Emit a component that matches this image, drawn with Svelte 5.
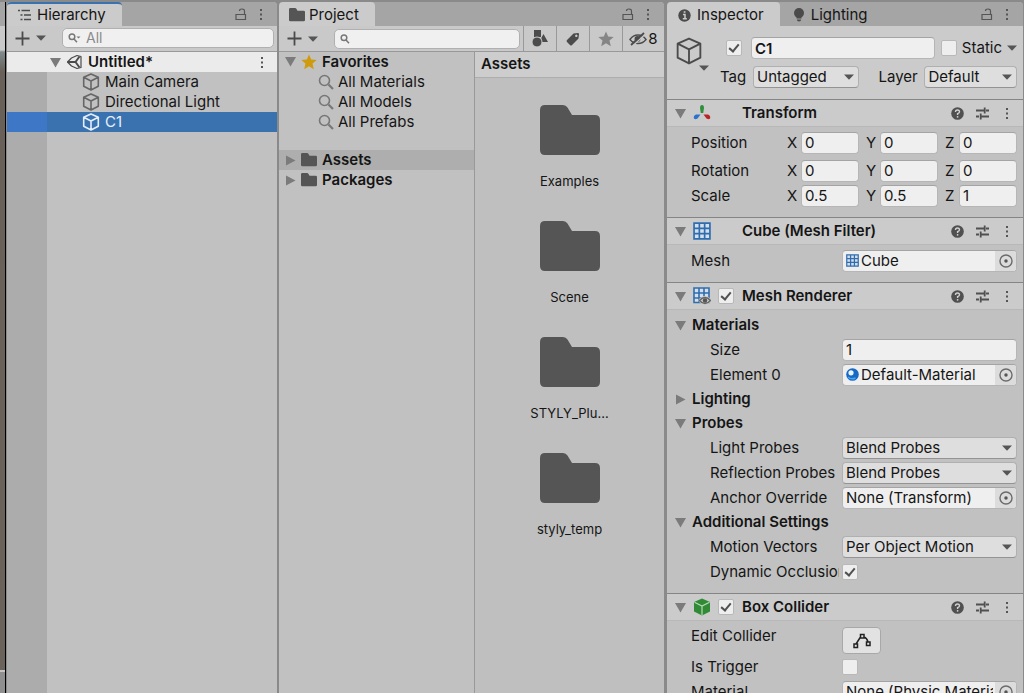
<script>
	let sceneItems = [
		{ name: 'Main Camera' },
		{ name: 'Directional Light' },
		{ name: 'C1' }
	]
	let selected = $state('C1')

	const favorites = ['All Materials', 'All Models', 'All Prefabs']
	const roots = ['Assets', 'Packages']
	const folders = ['Examples', 'Scene', 'STYLY_Plu...', 'styly_temp']

	let transform = $state([
		{ name: 'Position', x: '0', y: '0', z: '0' },
		{ name: 'Rotation', x: '0', y: '0', z: '0' },
		{ name: 'Scale', x: '0.5', y: '0.5', z: '1' }
	])
	const axes = ['x', 'y', 'z']
</script>

{#snippet lock()}
	<svg width="12" height="13" viewBox="0 0 12 13" fill="none" stroke="#555" stroke-width="1.2"><path d="M1 6.5h9.5v5H1zM9.5 6V3.2C9.5 1.6 8.7 1 7 1S4.5 1.6 4.5 3" /></svg>
{/snippet}

{#snippet dots()}
	<svg width="4" height="13" viewBox="0 0 4 13" fill="#555"><path d="M1 1h2v2H1zM1 5.5h2v2H1zM1 10h2v2H1z" /></svg>
{/snippet}

{#snippet down()}
	<svg class="arrow" width="10" height="6" viewBox="0 0 10 6" fill="#555"><path d="M0 0.5h10L5 5.7z" /></svg>
{/snippet}

{#snippet fold(open)}
	<svg class="fold" width="11" height="11" viewBox="0 0 11 11" fill="#7b7b7b"><path d={open ? 'M0 1h11L5.5 10.5z' : 'M1 0.5v10L10.5 5.5z'} /></svg>
{/snippet}

{#snippet plus()}
	<svg width="15" height="15" viewBox="0 0 15 15" stroke="#4b4b4b" stroke-width="1.8"><path d="M7.5 0.5v14M0.5 7.5h14" /></svg>
{/snippet}

{#snippet cube(size, color, width)}
	<svg width={size} height={size} viewBox="0 0 18 18" fill="none" stroke={color} stroke-width={width} stroke-linejoin="round"><path d="M9 1l7.3 3.3v9L9 17l-7.3-3.7v-9zM1.7 4.3L9 8l7.3-3.7M9 8v9" /></svg>
{/snippet}

{#snippet folder(size)}
	<svg width={size} height={size * 5 / 6} viewBox="0 0 60 50" fill="#555"><path d="M5 0h18q3 0 4.500 2.500L32 10h23q5 0 5 5v30q0 5-5 5H5q-5 0-5-5V5q0-5 5-5z" /></svg>
{/snippet}

{#snippet star(size, color)}
	<svg width={size} height={size} viewBox="0 0 16 16" fill={color}><path d="M8 0.5l2.2 5 5.5 0.5-4.2 3.6 1.3 5.6L8 12.3l-4.8 2.9 1.3-5.6L0.3 6l5.5-0.5z" /></svg>
{/snippet}

{#snippet grid(size)}
	<svg width={size} height={size} viewBox="0 0 17 17" fill="#d5dfe9" stroke="#2f6db0" stroke-width="1.6"><path d="M1 1h15v15H1zM6 1v15M11 1v15M1 6h15M1 11h15" /></svg>
{/snippet}

{#snippet tools()}
	<div class="tools">
		<button aria-label="Help">
			<svg width="13" height="13" viewBox="0 0 13 13"><circle cx="6.5" cy="6.5" r="6.3" fill="#505050" /><path d="M4.5 5Q4.5 3 6.5 3T8.5 4.8Q8.5 6 6.6 6.6V8" fill="none" stroke="#d0d0d0" stroke-width="1.4" /><circle cx="6.6" cy="9.8" r="0.9" fill="#d0d0d0" /></svg>
		</button>
		<button aria-label="Presets">
			<svg width="13" height="13" viewBox="0 0 13 13" fill="none" stroke="#505050" stroke-width="1.8"><path d="M0 3.5h8M10 3.5h3M8.7 0.5v6M0 9.5h3M5 9.5h8M4.7 6.5v6" /></svg>
		</button>
		<button aria-label="More">{@render dots()}</button>
	</div>
{/snippet}

{#snippet target()}
	<button class="target" aria-label="Select object">
		<svg width="14" height="14" viewBox="0 0 13 13"><circle cx="6.5" cy="6.5" r="5.6" fill="none" stroke="#6b6b6b" stroke-width="1.3" /><circle cx="6.5" cy="6.5" r="1.6" fill="#555" /></svg>
	</button>
{/snippet}

{#snippet dropdown(id, value)}
	<span class="dropdown">
		<select {id}><option>{value}</option></select>
		{@render down()}
	</span>
{/snippet}

<main>
	<div class="scene-edge"></div>

	<section class="panel hierarchy">
		<header class="tabs">
			<button class="tab focused">
				<svg width="14" height="12" viewBox="0 0 14 12" stroke="#4b4b4b" stroke-width="1.5"><path d="M0 1.5h2M3.5 1.5H12M2.500 6h2M6 6h7M2.500 10.500h2M6 10.500h7" /></svg>
				Hierarchy
			</button>
			<div class="tab-tools">
				<button aria-label="Lock">{@render lock()}</button>
				<button aria-label="Menu">{@render dots()}</button>
			</div>
		</header>
		<div class="toolbar">
			<button class="add" aria-label="Create">{@render plus()}{@render down()}</button>
			<label class="search">
				<svg width="13" height="10" viewBox="0 0 13 10" fill="none" stroke="#777" stroke-width="1.5"><circle cx="4" cy="3.8" r="2.8" /><path d="M6 6l3 3.3" /><path d="M8.5 3.5h4L10.500 5.500z" fill="#777" stroke="none" /></svg>
				<input type="text" placeholder="All" aria-label="Search hierarchy">
			</label>
		</div>
		<div class="tree">
			<div class="row scene">
				{@render fold(true)}
				<svg width="17" height="16" viewBox="0 0 17 16" fill="none" stroke="#4b4b4b" stroke-width="1.5" stroke-linejoin="round"><path d="M1.500 8L5.500 4L11 1.500L15 2.500V13.500L11 14.500L5.500 12z" stroke-width="1.2" /><path d="M1.500 8H9.500L13.500 2.500M9.500 8L13.500 13.500" stroke-width="2" /></svg>
				<b>Untitled*</b>
				<button class="row-menu" aria-label="Scene menu">{@render dots()}</button>
			</div>
			<div class="scene-body">
				{#each sceneItems as item}
					<button class="row object" class:selected={item.name === selected} onclick={() => selected = item.name}>
						{@render cube(18, item.name === selected ? '#e4eefa' : '#666', 1.6)}
						{item.name}
					</button>
				{/each}
			</div>
		</div>
	</section>

	<section class="panel project">
		<header class="tabs">
			<button class="tab">{@render folder(16)} Project</button>
			<div class="tab-tools">
				<button aria-label="Lock">{@render lock()}</button>
				<button aria-label="Menu">{@render dots()}</button>
			</div>
		</header>
		<div class="toolbar">
			<button class="add" aria-label="Create">{@render plus()}{@render down()}</button>
			<label class="search">
				<svg width="10" height="10" viewBox="0 0 10 10" fill="none" stroke="#777" stroke-width="1.5"><circle cx="4" cy="3.8" r="2.8" /><path d="M6 6l3 3.3" /></svg>
				<input type="text" aria-label="Search project">
			</label>
			<div class="filters">
				<button aria-label="Search by type">
					<svg width="16" height="17" viewBox="0 0 16 17" fill="#4b4b4b"><path d="M2 0h7v7H2zM11.5 4l4.500 8H9.500V7.500z" /><circle cx="5" cy="12" r="5" stroke="#c9c9c9" stroke-width="1" /></svg>
				</button>
				<button aria-label="Search by label">
					<svg width="14" height="14" viewBox="0 0 14 14" fill="#4b4b4b"><path fill-rule="evenodd" d="M7.5 1.5L12 1q1 0 1 1l-0.5 4.5L6 13Q5 14 4 13L1 10Q0 9 1 8zM10.3 2.6a1.2 1.2 0 1 0 0.01 0z" /></svg>
				</button>
				<button aria-label="Save search">{@render star(16, '#858585')}</button>
				<button class="hidden-count">
					<svg width="18" height="14" viewBox="0 0 18 14" fill="none" stroke="#4b4b4b" stroke-width="1.4"><path d="M1 7.5Q4 3 9 3t8 4.500Q14 11.500 9 11.500T1 7.500z" /><circle cx="8.500" cy="7" r="2.300" fill="#4b4b4b" /><path d="M3.500 14L16.500 2" stroke="#c9c9c9" /><path d="M2 13L15 1" stroke-width="1.800" /></svg>8
				</button>
			</div>
		</div>
		<div class="columns">
			<nav>
				<div class="row">
					{@render fold(true)}
					{@render star(16, '#cf9a0c')}
					<b>Favorites</b>
				</div>
				{#each favorites as name}
					<button class="row favorite">
						<svg width="16" height="16" viewBox="0 0 16 16" fill="none" stroke="#777"><circle cx="6.500" cy="6.500" r="5" stroke-width="1.600" /><path d="M10.500 10.500L15 15" stroke-width="2.200" /></svg>
						{name}
					</button>
				{/each}
				<div class="roots">
					{#each roots as name}
						<div class="row" class:current={name === 'Assets'}>
							{@render fold(false)}
							{@render folder(16)}
							<b>{name}</b>
						</div>
					{/each}
				</div>
			</nav>
			<div class="assets">
				<h2>Assets</h2>
				<div class="tiles">
					{#each folders as name}
						<button class="tile">{@render folder(60)}<span>{name}</span></button>
					{/each}
				</div>
			</div>
		</div>
	</section>

	<section class="panel inspector">
		<header class="tabs">
			<button class="tab">
				<svg width="13" height="13" viewBox="0 0 13 13"><circle cx="6.500" cy="6.500" r="6.200" fill="#4b4b4b" /><path d="M5 5.500h2v4M4.800 9.700h4M5.700 3h1.800" fill="none" stroke="#ccc" stroke-width="1.500" /></svg>
				Inspector
			</button>
			<button class="tab idle">
				<svg width="12" height="14" viewBox="0 0 12 14" fill="#4b4b4b"><circle cx="6" cy="5" r="5" /><path d="M3.500 8h5v2.500h-5zM3.800 11.500h4.400Q8 13.500 6 13.500T3.800 11.500z" /></svg>
				Lighting
			</button>
			<div class="tab-tools">
				<button aria-label="Lock">{@render lock()}</button>
				<button aria-label="Menu">{@render dots()}</button>
			</div>
		</header>

		<div class="object-header">
			<button class="object-icon" aria-label="Object icon">{@render cube(28, '#4b4b4b', 1.2)}{@render down()}</button>
			<div class="object-fields">
				<div class="line">
					<input type="checkbox" checked aria-label="Active">
					<input class="field name" type="text" value="C1" aria-label="Name">
					<label class="static"><input type="checkbox"> Static</label>
					{@render down()}
				</div>
				<div class="line">
					<label class="tag" for="tag">Tag</label>
					{@render dropdown('tag', 'Untagged')}
					<label class="layer" for="layer">Layer</label>
					{@render dropdown('layer', 'Default')}
				</div>
			</div>
		</div>

		<article>
			<div class="component">
				{@render fold(true)}
				<svg width="18" height="18" viewBox="0 0 18 18"><path d="M9 1Q11 1 11 4L10.200 9H7.800L7 4Q7 1 9 1z" fill="#2f8f3c" /><path d="M7.500 10.500L3 10.500Q0 12 1 14.500Q2 16 4.500 14.500z" fill="#2b72cc" /><path d="M10.500 10.500l4.500 0q3 1.500 2 4q-1 1.500-3.500 0z" fill="#bb2424" /></svg>
				<h3>Transform</h3>
				{@render tools()}
			</div>
			<div class="body">
				{#each transform as item}
					<div class="prop vector">
						<span>{item.name}</span>
						<div class="axes">
							{#each axes as axis}
								<label>{axis.toUpperCase()} <input class="field" type="text" bind:value={item[axis]}></label>
							{/each}
						</div>
					</div>
				{/each}
			</div>
		</article>

		<article>
			<div class="component">
				{@render fold(true)}
				{@render grid(18)}
				<h3>Cube (Mesh Filter)</h3>
				{@render tools()}
			</div>
			<div class="body">
				<div class="prop">
					<label for="mesh">Mesh</label>
					<div class="field object-field">{@render grid(13)}<input id="mesh" type="text" readonly value="Cube">{@render target()}</div>
				</div>
			</div>
		</article>

		<article>
			<div class="component">
				{@render fold(true)}
				<svg width="18" height="18" viewBox="0 0 18 18"><path d="M1 1h15v14.500H1zM6 1v14.500M11 1v14.500M1 6h15M1 11h15" fill="#d5dfe9" stroke="#2f6db0" stroke-width="1.600" /><path d="M5 13.500Q8 9 12 9t6.500 4.500q-3 4.500-6.500 4.500t-7-4.500z" fill="#cbcbcb" /><path d="M6.500 13.500Q9 10.500 12 10.500t5.500 3q-2.500 3-5.500 3t-5.500-3z" fill="#cbcbcb" stroke="#666" stroke-width="1.500" /><circle cx="12" cy="13.500" r="2.200" fill="#555" /></svg>
				<input type="checkbox" checked aria-label="Mesh Renderer enabled">
				<h3>Mesh Renderer</h3>
				{@render tools()}
			</div>
			<div class="body">
				<div class="foldout">{@render fold(true)} Materials</div>
				<div class="prop sub">
					<label for="size">Size</label>
					<input id="size" class="field" type="text" value="1">
				</div>
				<div class="prop sub">
					<label for="element">Element 0</label>
					<div class="field object-field">
						<svg width="13" height="13" viewBox="0 0 13 13"><circle cx="6.500" cy="6.500" r="6.300" fill="#1769c4" /><path d="M2 9Q5 12 9.500 10" fill="none" stroke="#4aa3ef" stroke-width="1.500" /><circle cx="5" cy="4.800" r="2.600" fill="#eaf4ff" /></svg>
						<input id="element" type="text" readonly value="Default-Material">{@render target()}
					</div>
				</div>
				<div class="foldout">{@render fold(false)} Lighting</div>
				<div class="foldout">{@render fold(true)} Probes</div>
				<div class="prop sub">
					<label for="light">Light Probes</label>
					{@render dropdown('light', 'Blend Probes')}
				</div>
				<div class="prop sub">
					<label for="reflection">Reflection Probes</label>
					{@render dropdown('reflection', 'Blend Probes')}
				</div>
				<div class="prop sub">
					<label for="anchor">Anchor Override</label>
					<div class="field object-field"><input id="anchor" type="text" readonly value="None (Transform)">{@render target()}</div>
				</div>
				<div class="foldout">{@render fold(true)} Additional Settings</div>
				<div class="prop sub">
					<label for="motion">Motion Vectors</label>
					{@render dropdown('motion', 'Per Object Motion')}
				</div>
				<div class="prop sub">
					<label for="occlusion">Dynamic Occlusion</label>
					<input id="occlusion" type="checkbox" checked>
				</div>
			</div>
		</article>

		<article>
			<div class="component">
				{@render fold(true)}
				<svg width="18" height="18" viewBox="0 0 18 18"><path d="M9 0.500l8 3.500v9.500L9 17.500l-8-4V4z" fill="#328a36" /><path d="M1.500 4.300L9 8l7.500-3.700M9 8v9.300" fill="none" stroke="#b5dbb6" stroke-width="1.200" /></svg>
				<input type="checkbox" checked aria-label="Box Collider enabled">
				<h3>Box Collider</h3>
				{@render tools()}
			</div>
			<div class="body">
				<div class="prop edit">
					<label for="edit">Edit Collider</label>
					<button id="edit" class="edit-button" aria-label="Edit Collider">
						<svg width="18" height="16" viewBox="0 0 18 16" fill="none" stroke="#222" stroke-width="1.500"><path d="M1 11h3.500v3.500H1zM13.500 9H17v3.500h-3.500zM7.500 1.500H11V5H7.500zM3 11L7.500 4M11 4q3 1 4 5" /></svg>
					</button>
				</div>
				<div class="prop">
					<label for="trigger">Is Trigger</label>
					<input id="trigger" type="checkbox">
				</div>
				<div class="prop">
					<label for="physic">Material</label>
					<div class="field object-field"><input id="physic" type="text" readonly value="None (Physic Material)">{@render target()}</div>
				</div>
			</div>
		</article>
	</section>
</main>

<style>
	:global(body) {
		background: #8a8a8a;
	}

	main {
		display: grid;
		grid-template-columns: 5px 270fr 386fr 356fr;
		column-gap: 2px;
		box-sizing: border-box;
		height: 100vh;
		padding: 2px 1px 0 0;
		overflow: hidden;
		background: #8a8a8a;
		color: #151515;
		font-family: Inter, "Liberation Sans", sans-serif;
		font-size: 15px;
		line-height: 20px;
	}

	button,
	input,
	select {
		box-sizing: border-box;
		margin: 0;
		padding: 0;
		border: 0;
		background: none;
		color: inherit;
		font: inherit;
	}

	svg {
		flex: none;
	}

	.scene-edge {
		border-right: 1px solid #000;
		background: linear-gradient(#a5a5a5 24px, #c9c9c9 24px 48px, #7f8a8c 50px, #686059 70px, #6b625b 668px, #c4c4c4 668px 670px, #8f8f8f 670px);
		margin-right: -1px;
	}

	.panel {
		display: flex;
		flex-direction: column;
		min-width: 0;
		min-height: 0;
		background: #c1c1c1;
		border-radius: 4px 4px 0 0;
		overflow: hidden;
	}

	.project {
		margin-right: 1px;
	}

	.tabs {
		display: flex;
		flex: none;
		height: 24px;
		background: #a5a5a5;
	}

	.tab {
		display: flex;
		align-items: center;
		gap: 5px;
		padding: 2px 16px 0 11px;
		border-radius: 4px 4px 0 0;
		background: #cbcbcb;
	}

	.project .tab {
		padding-left: 10px;
		gap: 4px;
	}

	.focused {
		padding-top: 0;
		border-top: 2px solid #3a72b0;
	}

	.inspector .tab {
		gap: 6px;
	}

	.tab.idle {
		padding-left: 13px;
		background: none;
	}

	.tab-tools {
		display: flex;
		align-items: center;
		gap: 12px;
		margin-left: auto;
		padding-right: 14px;
	}

	.tab-tools button,
	.tools button {
		display: flex;
	}

	.toolbar {
		display: flex;
		flex: none;
		align-items: center;
		box-sizing: border-box;
		height: 26px;
		padding: 0 3px 1px 8px;
		border-bottom: 1px solid #999;
		background: #c9c9c9;
	}

	.add {
		display: flex;
		align-items: center;
		gap: 6px;
		margin-right: 16px;
	}

	.search {
		display: flex;
		flex: 1;
		align-items: center;
		gap: 5px;
		box-sizing: border-box;
		min-width: 0;
		height: 20px;
		padding: 0 5px;
		border: 1px solid #b0b0b0;
		border-radius: 5px;
		background: #f0f0f0;
	}

	.search input {
		flex: 1;
		min-width: 0;
		font-size: 14px;
	}

	.search input::placeholder {
		color: #8b8b8b;
	}

	.tree {
		flex: 1;
		display: flex;
		flex-direction: column;
	}

	.row {
		display: flex;
		align-items: center;
		gap: 5px;
		width: 100%;
		height: 20px;
		box-sizing: border-box;
		padding-bottom: 1px;
		text-align: left;
		white-space: nowrap;
	}

	.scene {
		padding: 0 13px 0 43px;
		background: #ebebeb;
	}

	.row-menu {
		display: flex;
		margin-left: auto;
	}

	.scene-body {
		flex: 1;
		background: linear-gradient(to right, #acacac 40px, #c1c1c1 40px);
	}

	.object {
		padding-left: 75px;
	}

	.selected {
		background: linear-gradient(to right, #3d77c6 40px, #3a72b0 40px);
		color: #e8f0fa;
	}

	.project .toolbar {
		padding-right: 0;
		padding-bottom: 0;
	}

	.filters {
		display: flex;
		align-self: stretch;
		margin-left: 3px;
	}

	.filters button {
		display: flex;
		align-items: center;
		justify-content: center;
		width: 33px;
		border-left: 1px solid #999;
	}

	.filters .hidden-count {
		width: 42px;
		gap: 1px;
	}

	.columns {
		display: flex;
		flex: 1;
		min-height: 0;
	}

	nav {
		flex: 195;
		border-right: 1px solid #999;
	}

	nav .row {
		padding-left: 6px;
	}

	nav .favorite {
		gap: 4px;
		padding-left: 39px;
	}

	.roots {
		margin-top: 18px;
	}

	.roots .row {
		padding-bottom: 0;
	}

	.current {
		background: #aeaeae;
	}

	.assets {
		flex: 189;
		background: #bfbfbf;
	}

	h2,
	h3 {
		margin: 0;
		font-size: 15px;
		font-weight: 600;
	}

	b {
		font-weight: 600;
	}

	h2 {
		padding: 2px 6px 3px;
		border-bottom: 1px solid #adadad;
		background: #cdcdcd;
	}

	.tiles {
		display: grid;
		justify-content: center;
		grid-template-columns: 90px;
		gap: 30px;
		padding-top: 27px;
	}

	.tile {
		display: flex;
		flex-direction: column;
		align-items: center;
		gap: 16px;
		font-size: 13px;
	}

	.object-header {
		display: flex;
		gap: 17px;
		flex: none;
		box-sizing: border-box;
		height: 73px;
		padding: 11px 6px 0 8px;
		background: #cbcbcb;
	}

	.object-icon {
		display: flex;
		flex-direction: column;
		align-items: flex-end;
		align-self: flex-start;
		width: 34px;
	}

	.object-icon :global(svg:first-child) {
		align-self: flex-start;
	}

	.object-fields {
		display: flex;
		flex: 1;
		flex-direction: column;
		gap: 7px;
		min-width: 0;
	}

	.line {
		display: flex;
		align-items: center;
	}

	.name {
		flex: 1;
		margin: 0 6px 0 9px;
		font-weight: 600;
	}

	.static {
		display: flex;
		align-items: center;
		gap: 5px;
		margin-right: 5px;
	}

	.tag {
		width: 33px;
		margin-left: -6px;
	}

	.layer {
		width: 46px;
		margin-left: 19px;
	}

	.line .dropdown {
		flex: 107;
	}

	.line .layer + .dropdown {
		flex: 93;
	}

	.field {
		box-sizing: border-box;
		min-width: 0;
		height: 22px;
		padding: 0 3px;
		border: 1px solid #b6b6b6;
		border-top-color: #a4a4a4;
		border-radius: 4px;
		background: #efefef;
	}

	.dropdown {
		display: grid;
		align-items: center;
		min-width: 0;
	}

	.dropdown select {
		grid-area: 1 / 1;
		width: 100%;
		height: 22px;
		padding: 0 3px 1px;
		border: 1px solid #b0b0b0;
		border-bottom-color: #939393;
		border-radius: 4px;
		background: #dedede;
		appearance: none;
	}

	.dropdown .arrow {
		grid-area: 1 / 1;
		justify-self: end;
		margin-right: 5px;
		pointer-events: none;
	}

	input[type='checkbox'] {
		display: grid;
		flex: none;
		justify-content: center;
		width: 16px;
		height: 16px;
		border: 1px solid #b8b8b8;
		border-radius: 2px;
		background: #eee;
		appearance: none;
	}

	input[type='checkbox']:checked::after {
		content: '';
		width: 4px;
		height: 8px;
		margin-top: 1px;
		border: solid #505050;
		border-width: 0 2px 2px 0;
		transform: rotate(40deg);
	}

	article {
		flex: none;
		border-top: 1px solid #858585;
	}

	.component {
		display: flex;
		align-items: center;
		box-sizing: border-box;
		height: 27px;
		padding: 0 14px 0 8px;
		border-bottom: 1px solid #b8b8b8;
		background: #cbcbcb;
	}

	.component :global(svg + svg) {
		margin: 0 7px;
	}

	.component input + h3 {
		margin-left: 8px;
	}

	.component h3 {
		margin-left: 24px;
	}

	.tools {
		display: flex;
		align-items: center;
		gap: 12px;
		margin-left: auto;
	}

	.tools button:last-child {
		margin-left: 4px;
	}

	.body {
		padding: 3px 6px 9px 0;
	}

	.prop {
		display: grid;
		grid-template-columns: 148px minmax(0, 1fr);
		column-gap: 3px;
		align-items: center;
		height: 25px;
		padding-left: 24px;
	}

	.prop > label {
		overflow: hidden;
		white-space: nowrap;
	}

	.sub {
		grid-template-columns: 129px minmax(0, 1fr);
		padding-left: 43px;
	}

	.vector {
		grid-template-columns: 93px minmax(0, 1fr);
	}

	.vector:first-child {
		margin-bottom: 3px;
	}

	.axes {
		display: grid;
		grid-template-columns: repeat(3, minmax(0, 1fr));
		gap: 7px;
	}

	.axes label {
		display: grid;
		grid-template-columns: 11px minmax(0, 1fr);
		gap: 3px;
		align-items: center;
	}

	.object-field {
		display: flex;
		align-items: center;
		gap: 2px;
		padding-right: 0;
	}

	.object-field input {
		flex: 1;
		min-width: 0;
	}

	.target {
		display: flex;
		align-items: center;
		justify-content: center;
		flex: none;
		width: 21px;
		height: 20px;
		border-radius: 0 3px 3px 0;
		background: #dcdcdc;
	}

	.foldout {
		display: flex;
		align-items: center;
		gap: 6px;
		height: 24px;
		padding-left: 8px;
		font-weight: 600;
	}

	.edit {
		align-items: start;
		height: 30px;
		padding-top: 2px;
		box-sizing: border-box;
	}

	.edit-button {
		display: flex;
		align-items: center;
		justify-content: center;
		width: 39px;
		height: 27px;
		margin-top: 1px;
		border: 1px solid #a8a8a8;
		border-radius: 4px;
		background: #e2e2e2;
	}
</style>
